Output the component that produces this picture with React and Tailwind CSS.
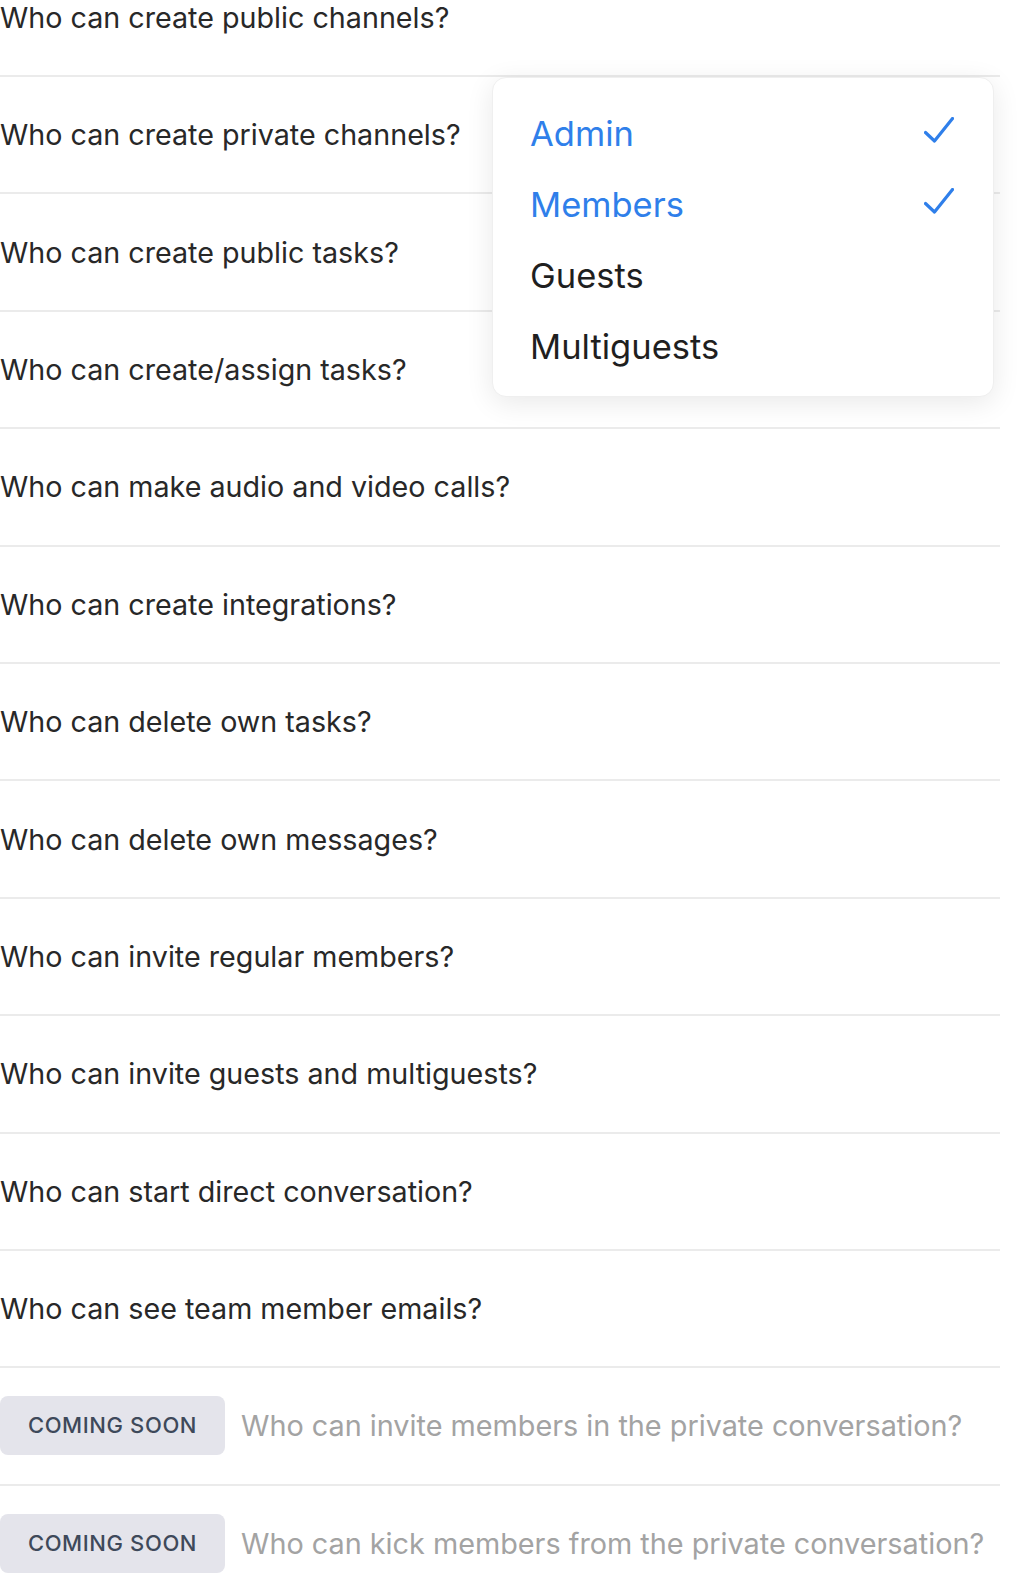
import React from "react";

const questions = [
  "Who can create public channels?",
  "Who can create private channels?",
  "Who can create public tasks?",
  "Who can create/assign tasks?",
  "Who can make audio and video calls?",
  "Who can create integrations?",
  "Who can delete own tasks?",
  "Who can delete own messages?",
  "Who can invite regular members?",
  "Who can invite guests and multiguests?",
  "Who can start direct conversation?",
  "Who can see team member emails?",
];

const comingSoon = [
  "Who can invite members in the private conversation?",
  "Who can kick members from the private conversation?",
];

const options = [
  { label: "Admin", checked: true },
  { label: "Members", checked: true },
  { label: "Guests", checked: false },
  { label: "Multiguests", checked: false },
];

const Check = () => (
  <svg width="30" height="26" viewBox="0 0 30 26" fill="none" className="-mt-2">
    <polyline
      points="1.5,15.5 10.5,24 28.5,1.5"
      stroke="#2f7fea"
      strokeWidth="3.2"
      strokeLinecap="round"
      strokeLinejoin="round"
    />
  </svg>
);

const App = () => {
  return (
    <div
      className="relative h-[1576px] overflow-hidden bg-white"
      style={{ fontFamily: "Inter, 'Noto Sans', sans-serif" }}
    >
      <div className="w-[1000px] -mt-[40.4px]">
        {questions.map((q) => (
          <div
            key={q}
            className="h-[117.4px] flex items-center border-b-2 border-[#ebebeb] text-[28.7px] text-[#282828]"
          >
            {q}
          </div>
        ))}
        {comingSoon.map((q) => (
          <div
            key={q}
            className="h-[117.4px] flex items-center border-b-2 border-[#ebebeb]"
          >
            <div className="w-[225px] h-[59px] shrink-0 flex items-center justify-center rounded-lg bg-[#e4e4eb] text-[22px] font-medium tracking-[0.6px] text-[#3e495a]">
              COMING SOON
            </div>
            <div className="ml-4 text-[28.8px] text-[#a3a3a3] whitespace-nowrap">
              {q}
            </div>
          </div>
        ))}
      </div>

      {/* dropdown for private channels */}
      <div className="absolute left-[492px] top-[77px] w-[502px] h-[320px] pt-[20px] pb-[16px] pl-[37px] pr-[39px] bg-white rounded-[14px] border border-[#efefef] shadow-[0_6px_28px_rgba(0,0,0,0.09)]">
        {options.map((o) => (
          <div
            key={o.label}
            className={
              "h-[71px] flex items-center justify-between text-[34.5px] " +
              (o.checked ? "text-[#2f7fea]" : "text-[#1f1f1f]")
            }
          >
            <span>{o.label}</span>
            {o.checked && <Check />}
          </div>
        ))}
      </div>
    </div>
  );
};

export default App;
